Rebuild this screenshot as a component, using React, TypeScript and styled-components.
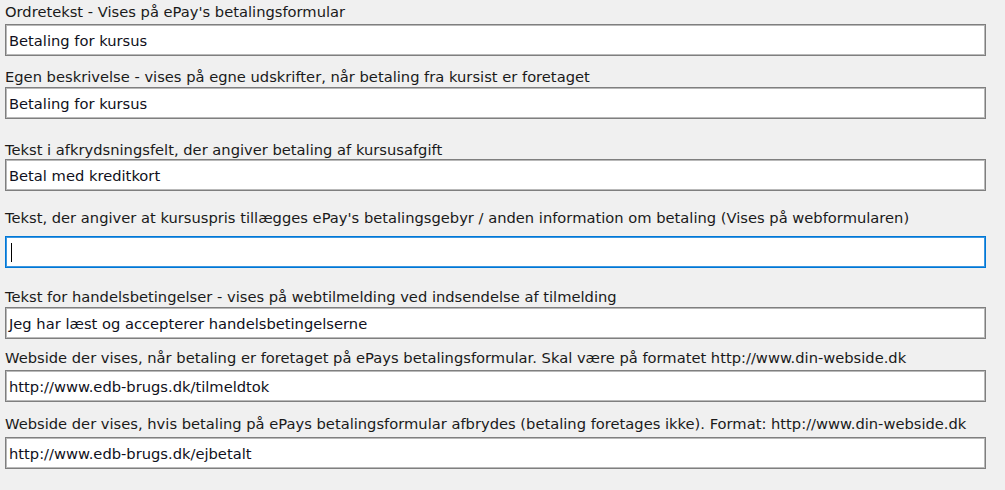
import React from "react";
import styled, { createGlobalStyle } from "styled-components";

const Global = createGlobalStyle`
  html, body {
    margin: 0;
    padding: 0;
    background: #f0f0f0;
  }
`;

const Form = styled.div`
  display: flex;
  flex-direction: column;
  width: 981px;
  padding-left: 5px;
  font-family: "DejaVu Sans", "Noto Sans", sans-serif;
  font-size: 14.7px;
  color: #000;
`;

const Field = styled.div<{ $top: number; $gap: number }>`
  display: flex;
  flex-direction: column;
  margin-top: ${(p) => p.$top}px;
  gap: ${(p) => p.$gap}px;
`;

const Label = styled.div`
  height: 16px;
  line-height: 16px;
  white-space: nowrap;
  color: #1a1a1a;
`;

const TextBox = styled.div<{ $focused?: boolean }>`
  box-sizing: border-box;
  height: 32px;
  display: flex;
  align-items: center;
  padding-left: 3px;
  background: #fff;
  color: #101020;
  border: 1px solid ${(p) => (p.$focused ? "#0078d7" : "#7f7f7f")};
  box-shadow: inset 0 0 0 1px ${(p) => (p.$focused ? "#3c96e0" : "#b9b9b9")};
  white-space: nowrap;
`;

const Caret = styled.span`
  display: inline-block;
  width: 1px;
  height: 19px;
  margin-left: 2px;
  background: #000;
`;

type Item = { label: string; value: string; top: number; gap: number; focused?: boolean };

const items: Item[] = [
  { label: "Ordretekst - Vises på ePay's betalingsformular", value: "Betaling for kursus", top: 4, gap: 4 },
  {
    label: "Egen beskrivelse - vises på egne udskrifter, når betaling fra kursist er foretaget",
    value: "Betaling for kursus",
    top: 13,
    gap: 2,
  },
  {
    label: "Tekst i afkrydsningsfelt, der angiver betaling af kursusafgift",
    value: "Betal med kreditkort",
    top: 23,
    gap: 1,
  },
  {
    label:
      "Tekst, der angiver at kursuspris tillægges ePay's betalingsgebyr / anden information om betaling (Vises på webformularen)",
    value: "",
    top: 19,
    gap: 10,
    focused: true,
  },
  {
    label: "Tekst for handelsbetingelser - vises på webtilmelding ved indsendelse af tilmelding",
    value: "Jeg har læst og accepterer handelsbetingelserne",
    top: 21,
    gap: 2,
  },
  {
    label:
      "Webside der vises, når betaling er foretaget på ePays betalingsformular. Skal være på formatet http://www.din-webside.dk",
    value: "http://www.edb-brugs.dk/tilmeldtok",
    top: 11,
    gap: 4,
  },
  {
    label:
      "Webside der vises, hvis betaling på ePays betalingsformular afbrydes (betaling foretages ikke). Format: http://www.din-webside.dk",
    value: "http://www.edb-brugs.dk/ejbetalt",
    top: 14,
    gap: 5,
  },
];

const App: React.FC = () => {
  return (
    <>
      <Global />
      <Form>
        {items.map((it) => (
          <Field key={it.label} $top={it.top} $gap={it.gap}>
            <Label>{it.label}</Label>
            <TextBox $focused={it.focused}>{it.focused ? <Caret /> : it.value}</TextBox>
          </Field>
        ))}
      </Form>
    </>
  );
};

export default App;
